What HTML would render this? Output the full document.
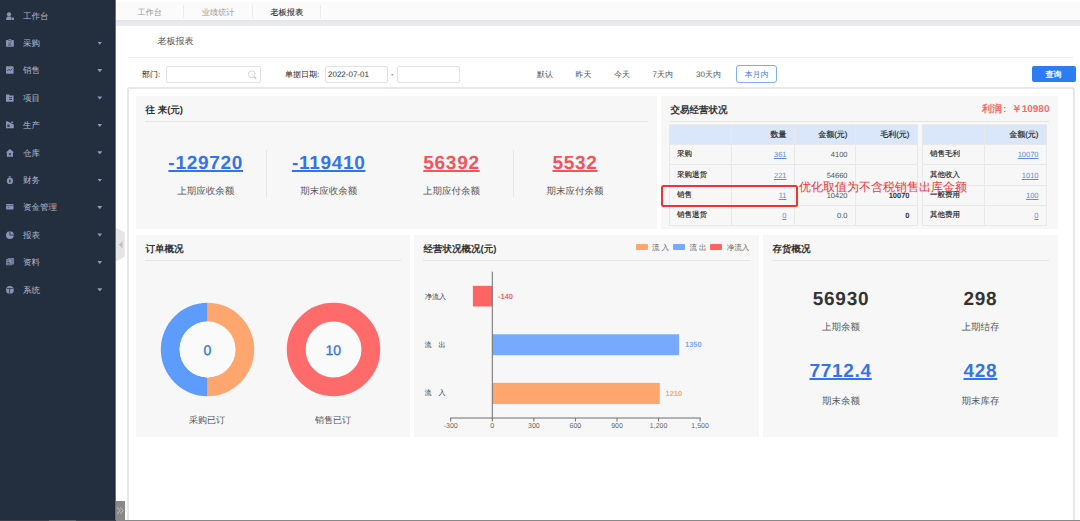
<!DOCTYPE html>
<html><head><meta charset="utf-8">
<style>
*{margin:0;padding:0;box-sizing:border-box}
html,body{width:1080px;height:521px;overflow:hidden;background:#fff;font-family:"Liberation Sans",sans-serif;color:#333;text-rendering:geometricPrecision}
.a{position:absolute;white-space:nowrap}
#side{position:absolute;left:0;top:0;width:116px;height:521px;background:linear-gradient(90deg,#232e3e 0,#232e3e 114px,#1f2837 114px,#1f2837 115px,#6f7680 115px)}
.mi{position:absolute;left:0;width:116px;height:20px;line-height:21px;font-size:8.5px;color:#b4b9cd}
.mi .t{position:absolute;left:23px;top:0}
.mi svg.ic{position:absolute;left:6px;top:6.1px;width:8px;height:8px;overflow:visible}
.mi .car{position:absolute;left:97.3px;top:8.6px;width:5px;height:3.2px;background:#9499bb;clip-path:polygon(0 0,100% 0,50% 100%)}
.panel{position:absolute;background:#f7f7f7}
.ptitle{position:absolute;left:9.5px;top:7.5px;font-size:9.5px;font-weight:bold;color:#333;line-height:14px}
.pline{position:absolute;left:9px;right:9px;top:25px;height:1px;background:#e6e6e6}
.big{position:absolute;font-size:19px;letter-spacing:0.7px;font-weight:bold;text-decoration:underline;text-underline-offset:1px;text-decoration-thickness:1.5px;line-height:22px;text-align:center}
.lbl{position:absolute;font-size:9.5px;color:#555;line-height:14px;text-align:center}
table{border-collapse:collapse;position:absolute;table-layout:fixed}
td{border:1px solid #e9e9e9;height:20.35px;font-size:7.5px;color:#555;padding:0 7px;text-align:right}
td.l{text-align:left;color:#222;-webkit-text-stroke:0.15px #222}
tr.h td{background:#dae7fb;color:#2a2a2a;font-size:8px;-webkit-text-stroke:0.2px #2a2a2a;height:20px;padding-top:1.5px}
.lnk{color:#5b8ee8;text-decoration:underline;text-decoration-thickness:0.7px;text-underline-offset:1px}
</style></head><body>

<div id="side">
  <div class="mi" style="top:5.5px"><svg class="ic" viewBox="0 0 8 8"><circle cx="3" cy="2.3" r="2.1" fill="#8d93b6"/><path d="M0 8 L0.4 5.9 Q0.8 4.6 2 4.6 L4.3 4.6 Q5.2 4.6 5.5 5.4 L5.5 8Z" fill="#8d93b6"/><rect x="5.9" y="5.6" width="2" height="2.4" rx="0.5" fill="#8d93b6"/></svg><span class="t">工作台</span></div>
  <div class="mi" style="top:33px"><svg class="ic" viewBox="0 0 8 8"><rect x="0" y="0.9" width="7.8" height="6.9" rx="0.6" fill="#8d93b6"/><rect x="2.3" y="0" width="3.2" height="1.6" rx="0.5" fill="#8d93b6" stroke="#232e3e" stroke-width="0.5"/><path d="M2.4 3.8 L3.5 4.7 L5.5 2.9" stroke="#232e3e" stroke-width="0.7" fill="none"/><rect x="2" y="5.7" width="3.6" height="0.7" fill="#232e3e"/></svg><span class="t">采购</span><i class="car"></i></div>
  <div class="mi" style="top:60.4px"><svg class="ic" viewBox="0 0 8 8"><rect x="0" y="0.3" width="7.6" height="7.4" rx="0.8" fill="#8d93b6"/><path d="M1.3 5 L2.8 3.4 L4.3 4.5 L6.3 2.7" stroke="#232e3e" stroke-width="0.8" fill="none"/></svg><span class="t">销售</span><i class="car"></i></div>
  <div class="mi" style="top:87.8px"><svg class="ic" viewBox="0 0 8 8"><path d="M0 0.5 L3 0.5 L3.8 1.5 L7.6 1.5 L7.6 7.8 L0 7.8Z" fill="#8d93b6"/><rect x="3" y="3.3" width="3" height="0.8" fill="#232e3e"/><rect x="3" y="5.1" width="3" height="0.8" fill="#232e3e"/></svg><span class="t">项目</span><i class="car"></i></div>
  <div class="mi" style="top:115.2px"><svg class="ic" viewBox="0 0 8 8"><path d="M0 0.3 L1.2 0.3 L7.8 3.6 L7.8 7.3 L0 7.3Z" fill="#8d93b6"/><circle cx="6.1" cy="1.2" r="0.9" fill="#8d93b6"/><rect x="1.3" y="3.5" width="2.4" height="2.6" fill="#232e3e" opacity="0.8"/></svg><span class="t">生产</span><i class="car"></i></div>
  <div class="mi" style="top:142.6px"><svg class="ic" viewBox="0 0 8 8"><path d="M3.95 0 L8 3.6 L7 3.6 L7 7.8 L0.9 7.8 L0.9 3.6 L-0.1 3.6Z" fill="#8d93b6"/><rect x="2.9" y="4.1" width="2.1" height="2" fill="#232e3e" opacity="0.8"/></svg><span class="t">仓库</span><i class="car"></i></div>
  <div class="mi" style="top:170px"><svg class="ic" viewBox="0 0 8 8"><ellipse cx="3.8" cy="0.9" rx="1.5" ry="0.7" fill="#8d93b6"/><circle cx="3.9" cy="4.9" r="3.1" fill="#8d93b6"/><ellipse cx="3.9" cy="5" rx="0.9" ry="1.7" fill="#232e3e" opacity="0.85"/></svg><span class="t">财务</span><i class="car"></i></div>
  <div class="mi" style="top:197.4px"><svg class="ic" viewBox="0 0 8 8"><rect x="0.1" y="0.9" width="7.4" height="5.6" rx="0.4" fill="#8d93b6"/><rect x="0.1" y="2.2" width="7.4" height="0.7" fill="#232e3e" opacity="0.7"/><rect x="1.8" y="4.3" width="1.4" height="0.6" fill="#232e3e" opacity="0.8"/></svg><span class="t">资金管理</span><i class="car"></i></div>
  <div class="mi" style="top:224.8px"><svg class="ic" viewBox="0 0 8 8"><circle cx="3.9" cy="4.1" r="3.9" fill="#8d93b6"/><path d="M3.9 0 L3.9 4.1 L7.9 4.1" stroke="#232e3e" stroke-width="0.8" fill="none"/></svg><span class="t">报表</span><i class="car"></i></div>
  <div class="mi" style="top:252.2px"><svg class="ic" viewBox="0 0 8 8"><rect x="1.6" y="0" width="6.2" height="6.6" rx="0.4" fill="#8d93b6"/><rect x="0" y="0.9" width="6" height="6.7" rx="0.4" fill="#8d93b6" stroke="#232e3e" stroke-width="0.5"/><rect x="1.3" y="2.3" width="1.5" height="0.7" fill="#232e3e"/><rect x="1.3" y="4" width="2.6" height="0.7" fill="#232e3e"/><rect x="1.3" y="5.7" width="3.5" height="0.7" fill="#232e3e"/></svg><span class="t">资料</span><i class="car"></i></div>
  <div class="mi" style="top:279.6px"><svg class="ic" viewBox="0 0 8 8"><circle cx="3.9" cy="3.9" r="3.85" fill="#8d93b6"/><path d="M1 2.6 L6.8 2.6 M3.6 2.6 L3.6 7.8" stroke="#232e3e" stroke-width="0.8" fill="none"/></svg><span class="t">系统</span><i class="car"></i></div>
</div>

<!-- tab bar -->
<div class="a" style="left:116px;top:0;width:964px;height:2px;background:#fff"></div>
<div class="a" style="left:116px;top:2px;width:964px;height:17.5px;background:#fbfbfb"></div>
<div class="a" style="left:116px;top:19.5px;width:964px;height:6.5px;background:linear-gradient(#e2e5e9,#eceef1)"></div>
<div class="a" style="left:137.4px;top:5.5px;font-size:8.2px;line-height:14px;color:#999">工作台</div>
<div class="a" style="left:183px;top:5px;width:1px;height:12.5px;background:#ececec"></div>
<div class="a" style="left:201.8px;top:5.5px;font-size:8.2px;line-height:14px;color:#999">业绩统计</div>
<div class="a" style="left:252px;top:5px;width:1px;height:12.5px;background:#ececec"></div>
<div class="a" style="left:270.4px;top:5.5px;font-size:8.2px;line-height:14px;color:#2a2a2a;-webkit-text-stroke:0.1px #2a2a2a">老板报表</div>
<div class="a" style="left:320px;top:5px;width:1px;height:12.5px;background:#ececec"></div>

<!-- title -->
<div class="a" style="left:157.5px;top:34px;font-size:9px;line-height:14px;color:#555">老板报表</div>
<div class="a" style="left:128px;top:57px;width:945px;height:1px;background:#ebebeb"></div>

<!-- filter row -->
<div class="a" style="left:142px;top:68px;font-size:8px;line-height:14px;color:#222">部门:</div>
<div class="a" style="left:166px;top:66px;width:94.5px;height:16.5px;border:1px solid #e1e2e5;border-radius:2px;background:#fff"></div>
<svg class="a" style="left:247px;top:70px" width="11" height="10" viewBox="0 0 11 10"><circle cx="4.7" cy="4.3" r="3.4" stroke="#d0d2d7" stroke-width="0.9" fill="none"/><path d="M7.2 6.8 L9.3 8.8" stroke="#c9cbd1" stroke-width="1.5"/></svg>
<div class="a" style="left:285px;top:68px;font-size:8px;line-height:14px;color:#222">单据日期:</div>
<div class="a" style="left:325px;top:66px;width:63px;height:16.5px;border:1px solid #e1e2e5;border-radius:2px;background:#fff"></div>
<div class="a" style="left:328px;top:68px;font-size:8px;line-height:14px;color:#333">2022-07-01</div>
<div class="a" style="left:391px;top:68px;font-size:8px;line-height:14px;color:#333">-</div>
<div class="a" style="left:397px;top:66px;width:63px;height:16.5px;border:1px solid #e1e2e5;border-radius:2px;background:#fff"></div>
<div class="a" style="left:537px;top:68px;font-size:8px;line-height:14px;color:#555">默认</div>
<div class="a" style="left:575.5px;top:68px;font-size:8px;line-height:14px;color:#555">昨天</div>
<div class="a" style="left:614px;top:68px;font-size:8px;line-height:14px;color:#555">今天</div>
<div class="a" style="left:652.5px;top:68px;font-size:8px;line-height:14px;color:#555">7天内</div>
<div class="a" style="left:696px;top:68px;font-size:8px;line-height:14px;color:#555">30天内</div>
<div class="a" style="left:736px;top:65px;width:41px;height:17.5px;border:1px solid #82adf4;border-radius:3px;background:#fff"></div>
<div class="a" style="left:744.5px;top:68px;font-size:8px;line-height:14px;color:#4a80ec">本月内</div>
<div class="a" style="left:1031.5px;top:66px;width:44px;height:16px;border-radius:2px;background:#2f7cf0"></div>
<div class="a" style="left:1045.5px;top:67.5px;font-size:8px;line-height:14px;color:#fff;font-weight:bold">查询</div>

<!-- container -->
<div class="a" style="left:127px;top:87px;width:948px;height:440px;border:2px solid #e8e8e8;border-radius:3px"></div>

<!-- panel 1 -->
<div class="panel" style="left:136px;top:96px;width:521px;height:133px">
  <div class="ptitle">往 来(元)</div>
  <div class="pline"></div>
</div>

<!-- panel 2 -->
<div class="panel" style="left:661px;top:96px;width:397px;height:133px">
  <div class="ptitle">交易经营状况</div>
  <div class="pline"></div>
</div>

<!-- panel 3 -->
<div class="panel" style="left:136px;top:235px;width:274px;height:202px">
  <div class="ptitle">订单概况</div>
  <div class="pline"></div>
</div>

<!-- panel 4 -->
<div class="panel" style="left:414px;top:235px;width:345px;height:202px">
  <div class="ptitle">经营状况概况(元)</div>
  <div class="pline"></div>
</div>

<!-- panel 5 -->
<div class="panel" style="left:763px;top:235px;width:295px;height:202px">
  <div class="ptitle">存货概况</div>
  <div class="pline"></div>
</div>


<!-- panel1 content -->
<div class="big" style="left:145.7px;top:153.2px;width:120px;color:#3473ea">-129720</div>
<div class="big" style="left:268.7px;top:153.2px;width:120px;color:#3473ea">-119410</div>
<div class="big" style="left:391.5px;top:153.2px;width:120px;color:#f6535b">56392</div>
<div class="big" style="left:515px;top:153.2px;width:120px;color:#f6535b">5532</div>
<div class="lbl" style="left:145.7px;top:185.2px;width:120px">上期应收余额</div>
<div class="lbl" style="left:268.7px;top:185.2px;width:120px">期末应收余额</div>
<div class="lbl" style="left:391.5px;top:185.2px;width:120px">上期应付余额</div>
<div class="lbl" style="left:515px;top:185.2px;width:120px">期末应付余额</div>
<div class="a" style="left:266px;top:150px;width:1px;height:47px;background:#e6e6e6"></div>
<div class="a" style="left:512.5px;top:150px;width:1px;height:47px;background:#e6e6e6"></div>

<!-- panel2 content -->
<div class="a" style="left:982px;top:103.3px;font-size:10px;line-height:14px;font-weight:bold;color:#f56c6c">利润</div>
<div class="a" style="left:1003px;top:103.3px;font-size:10px;line-height:14px;font-weight:bold;color:#f56c6c">:</div>
<div class="a" style="left:949px;top:103.3px;width:100.5px;text-align:right;font-size:10px;line-height:14px;font-weight:bold;color:#f56c6c">￥10980</div>
<table style="left:669px;top:124px;width:247.5px">
<colgroup><col style="width:62px"><col style="width:62.5px"><col style="width:61px"><col style="width:62px"></colgroup>
<tr class="h"><td></td><td>数量</td><td>金额(元)</td><td>毛利(元)</td></tr>
<tr><td class="l">采购</td><td><span class="lnk">361</span></td><td>4100</td><td></td></tr>
<tr><td class="l">采购退货</td><td><span class="lnk">221</span></td><td>54660</td><td></td></tr>
<tr><td class="l">销售</td><td><span class="lnk">11</span></td><td>10420</td><td style="font-weight:bold;color:#333">10070</td></tr>
<tr><td class="l">销售退货</td><td><span class="lnk">0</span></td><td>0.0</td><td style="font-weight:bold;color:#333">0</td></tr>
</table>
<table style="left:922px;top:124px;width:123.5px">
<colgroup><col style="width:62px"><col style="width:61.5px"></colgroup>
<tr class="h"><td></td><td>金额(元)</td></tr>
<tr><td class="l">销售毛利</td><td><span class="lnk">10070</span></td></tr>
<tr><td class="l">其他收入</td><td><span class="lnk">1010</span></td></tr>
<tr><td class="l">一般费用</td><td><span class="lnk">100</span></td></tr>
<tr><td class="l">其他费用</td><td><span class="lnk">0</span></td></tr>
</table>
<div class="a" style="left:660.8px;top:184.8px;width:137.5px;height:22px;border:2px solid #f03434;border-radius:2.5px"></div>
<div class="a" style="left:799px;top:179px;font-size:12px;line-height:16px;color:#f03838">优化取值为不含税销售出库金额</div>

<!-- panel3 content -->
<svg class="a" style="left:160px;top:301.5px" width="95" height="95" viewBox="0 0 95 95">
  <path d="M47.5 0.8 A46.7 46.7 0 0 1 47.5 94.2 L47.5 75.4 A27.9 27.9 0 0 0 47.5 19.6Z" fill="#ffa66f"/>
  <path d="M47.5 0.8 A46.7 46.7 0 0 0 47.5 94.2 L47.5 75.4 A27.9 27.9 0 0 1 47.5 19.6Z" fill="#5d9cfc"/>
  <circle cx="47.5" cy="47.5" r="27.9" fill="#fafafa"/>
</svg>
<svg class="a" style="left:285.7px;top:301.5px" width="95" height="95" viewBox="0 0 95 95">
  <circle cx="47.5" cy="47.5" r="37.3" stroke="#ff6b6b" stroke-width="18.8" fill="#fafafa"/>
</svg>
<div class="a" style="left:167.5px;top:341px;width:80px;text-align:center;font-size:14px;line-height:18px;color:#3473e6;-webkit-text-stroke:0.3px #3473e6">0</div>
<div class="a" style="left:293.2px;top:341px;width:80px;text-align:center;font-size:14px;line-height:18px;color:#3473e6;-webkit-text-stroke:0.3px #3473e6">10</div>
<div class="lbl" style="left:157px;top:412.5px;width:100px;font-size:9px;color:#555">采购已订</div>
<div class="lbl" style="left:283px;top:412.5px;width:100px;font-size:9px;color:#555">销售已订</div>

<!-- panel5 content -->
<div class="big" style="left:781px;top:289.2px;width:120px;color:#333;text-decoration:none">56930</div>
<div class="big" style="left:920.4px;top:289.2px;width:120px;color:#333;text-decoration:none">298</div>
<div class="lbl" style="left:781px;top:321.3px;width:120px;font-size:9.5px">上期余额</div>
<div class="lbl" style="left:920.4px;top:321.3px;width:120px;font-size:9.5px">上期结存</div>
<div class="big" style="left:780.6px;top:361px;width:120px;color:#3473ea">7712.4</div>
<div class="big" style="left:920.4px;top:361px;width:120px;color:#3473ea">428</div>
<div class="lbl" style="left:781px;top:395.2px;width:120px;font-size:9.5px">期末余额</div>
<div class="lbl" style="left:920.4px;top:395.2px;width:120px;font-size:9.5px">期末库存</div>


<!-- panel4 content: bar chart -->
<div class="a" style="left:635.8px;top:244.3px;width:12px;height:6px;background:#ffa66f;border-radius:1px"></div>
<div class="a" style="left:652px;top:243px;font-size:7.5px;line-height:10px;color:#666">流 入</div>
<div class="a" style="left:672.7px;top:244.3px;width:12px;height:6px;background:#77aaff;border-radius:1px"></div>
<div class="a" style="left:689.5px;top:243px;font-size:7.5px;line-height:10px;color:#666">流 出</div>
<div class="a" style="left:710px;top:244.3px;width:12px;height:6px;background:#ff6464;border-radius:1px"></div>
<div class="a" style="left:726.8px;top:243px;font-size:7.5px;line-height:10px;color:#666">净流入</div>
<svg class="a" style="left:414px;top:235px" width="345" height="202" viewBox="414 235 345 202">
  <rect x="472.9" y="285.9" width="19.4" height="20.6" fill="#ff6464"/>
  <rect x="492.3" y="334.3" width="186.8" height="20.9" fill="#77aaff"/>
  <rect x="492.3" y="382.9" width="167.5" height="21.1" fill="#ffa66f"/>
  <line x1="492.3" y1="271.7" x2="492.3" y2="418" stroke="#6e6e6e" stroke-width="1"/>
  <line x1="450.2" y1="418" x2="700.6" y2="418" stroke="#6e6e6e" stroke-width="1"/>
  <g stroke="#6e6e6e" stroke-width="1">
    <line x1="450.7" y1="418" x2="450.7" y2="421.5"/>
    <line x1="492.3" y1="418" x2="492.3" y2="421.5"/>
    <line x1="533.9" y1="418" x2="533.9" y2="421.5"/>
    <line x1="575.4" y1="418" x2="575.4" y2="421.5"/>
    <line x1="617" y1="418" x2="617" y2="421.5"/>
    <line x1="658.6" y1="418" x2="658.6" y2="421.5"/>
    <line x1="700.1" y1="418" x2="700.1" y2="421.5"/>
  </g>
</svg>
<div class="a" style="left:430.7px;top:422px;width:40px;text-align:center;font-size:7px;line-height:10px;color:#666">-300</div>
<div class="a" style="left:472.3px;top:422px;width:40px;text-align:center;font-size:7px;line-height:10px;color:#666">0</div>
<div class="a" style="left:513.9px;top:422px;width:40px;text-align:center;font-size:7px;line-height:10px;color:#666">300</div>
<div class="a" style="left:555.4px;top:422px;width:40px;text-align:center;font-size:7px;line-height:10px;color:#666">600</div>
<div class="a" style="left:597px;top:422px;width:40px;text-align:center;font-size:7px;line-height:10px;color:#666">900</div>
<div class="a" style="left:638.6px;top:422px;width:40px;text-align:center;font-size:7px;line-height:10px;color:#666">1,200</div>
<div class="a" style="left:680.1px;top:422px;width:40px;text-align:center;font-size:7px;line-height:10px;color:#666">1,500</div>
<div class="a" style="left:425px;top:292.5px;font-size:7px;line-height:10px;color:#333">净流入</div>
<div class="a" style="left:424.5px;top:341px;font-size:7px;line-height:10px;color:#333">流　出</div>
<div class="a" style="left:424.5px;top:389px;font-size:7px;line-height:10px;color:#333">流　入</div>
<div class="a" style="left:498px;top:291.5px;font-size:7.5px;line-height:10px;color:#ff6464;font-weight:bold">-140</div>
<div class="a" style="left:685px;top:340px;font-size:7.5px;line-height:10px;color:#77aaff;font-weight:bold">1350</div>
<div class="a" style="left:665.5px;top:389px;font-size:7.5px;line-height:10px;color:#ffa66f;font-weight:bold">1210</div>

<!-- collapse handles -->
<svg class="a" style="left:116px;top:227px" width="10" height="36" viewBox="0 0 10 36"><path d="M0 0.8 L8.8 5.5 L8.8 29.8 L0 34.5Z" fill="#e6e6e6"/><path d="M6.6 13.9 L6.6 21.6 L2.8 17.75Z" fill="#c2c2c2"/></svg>
<div class="a" style="left:116px;top:501px;width:9px;height:20px;background:#888"></div>
<svg class="a" style="left:116px;top:505px" width="9" height="12" viewBox="0 0 9 12"><path d="M1.2 2.3 L4.1 5.6 L1.2 8.9 M4.2 2.3 L7.1 5.6 L4.2 8.9" stroke="#c9c9c9" stroke-width="0.9" fill="none"/></svg>
<div class="a" style="left:116px;top:520px;width:964px;height:1px;background:#888"></div>
<div class="a" style="left:0;top:520px;width:116px;height:1px;background:#3a404a"></div>
<div class="a" style="left:49px;top:520px;width:27px;height:1px;background:#5d626b"></div>

</body></html>
